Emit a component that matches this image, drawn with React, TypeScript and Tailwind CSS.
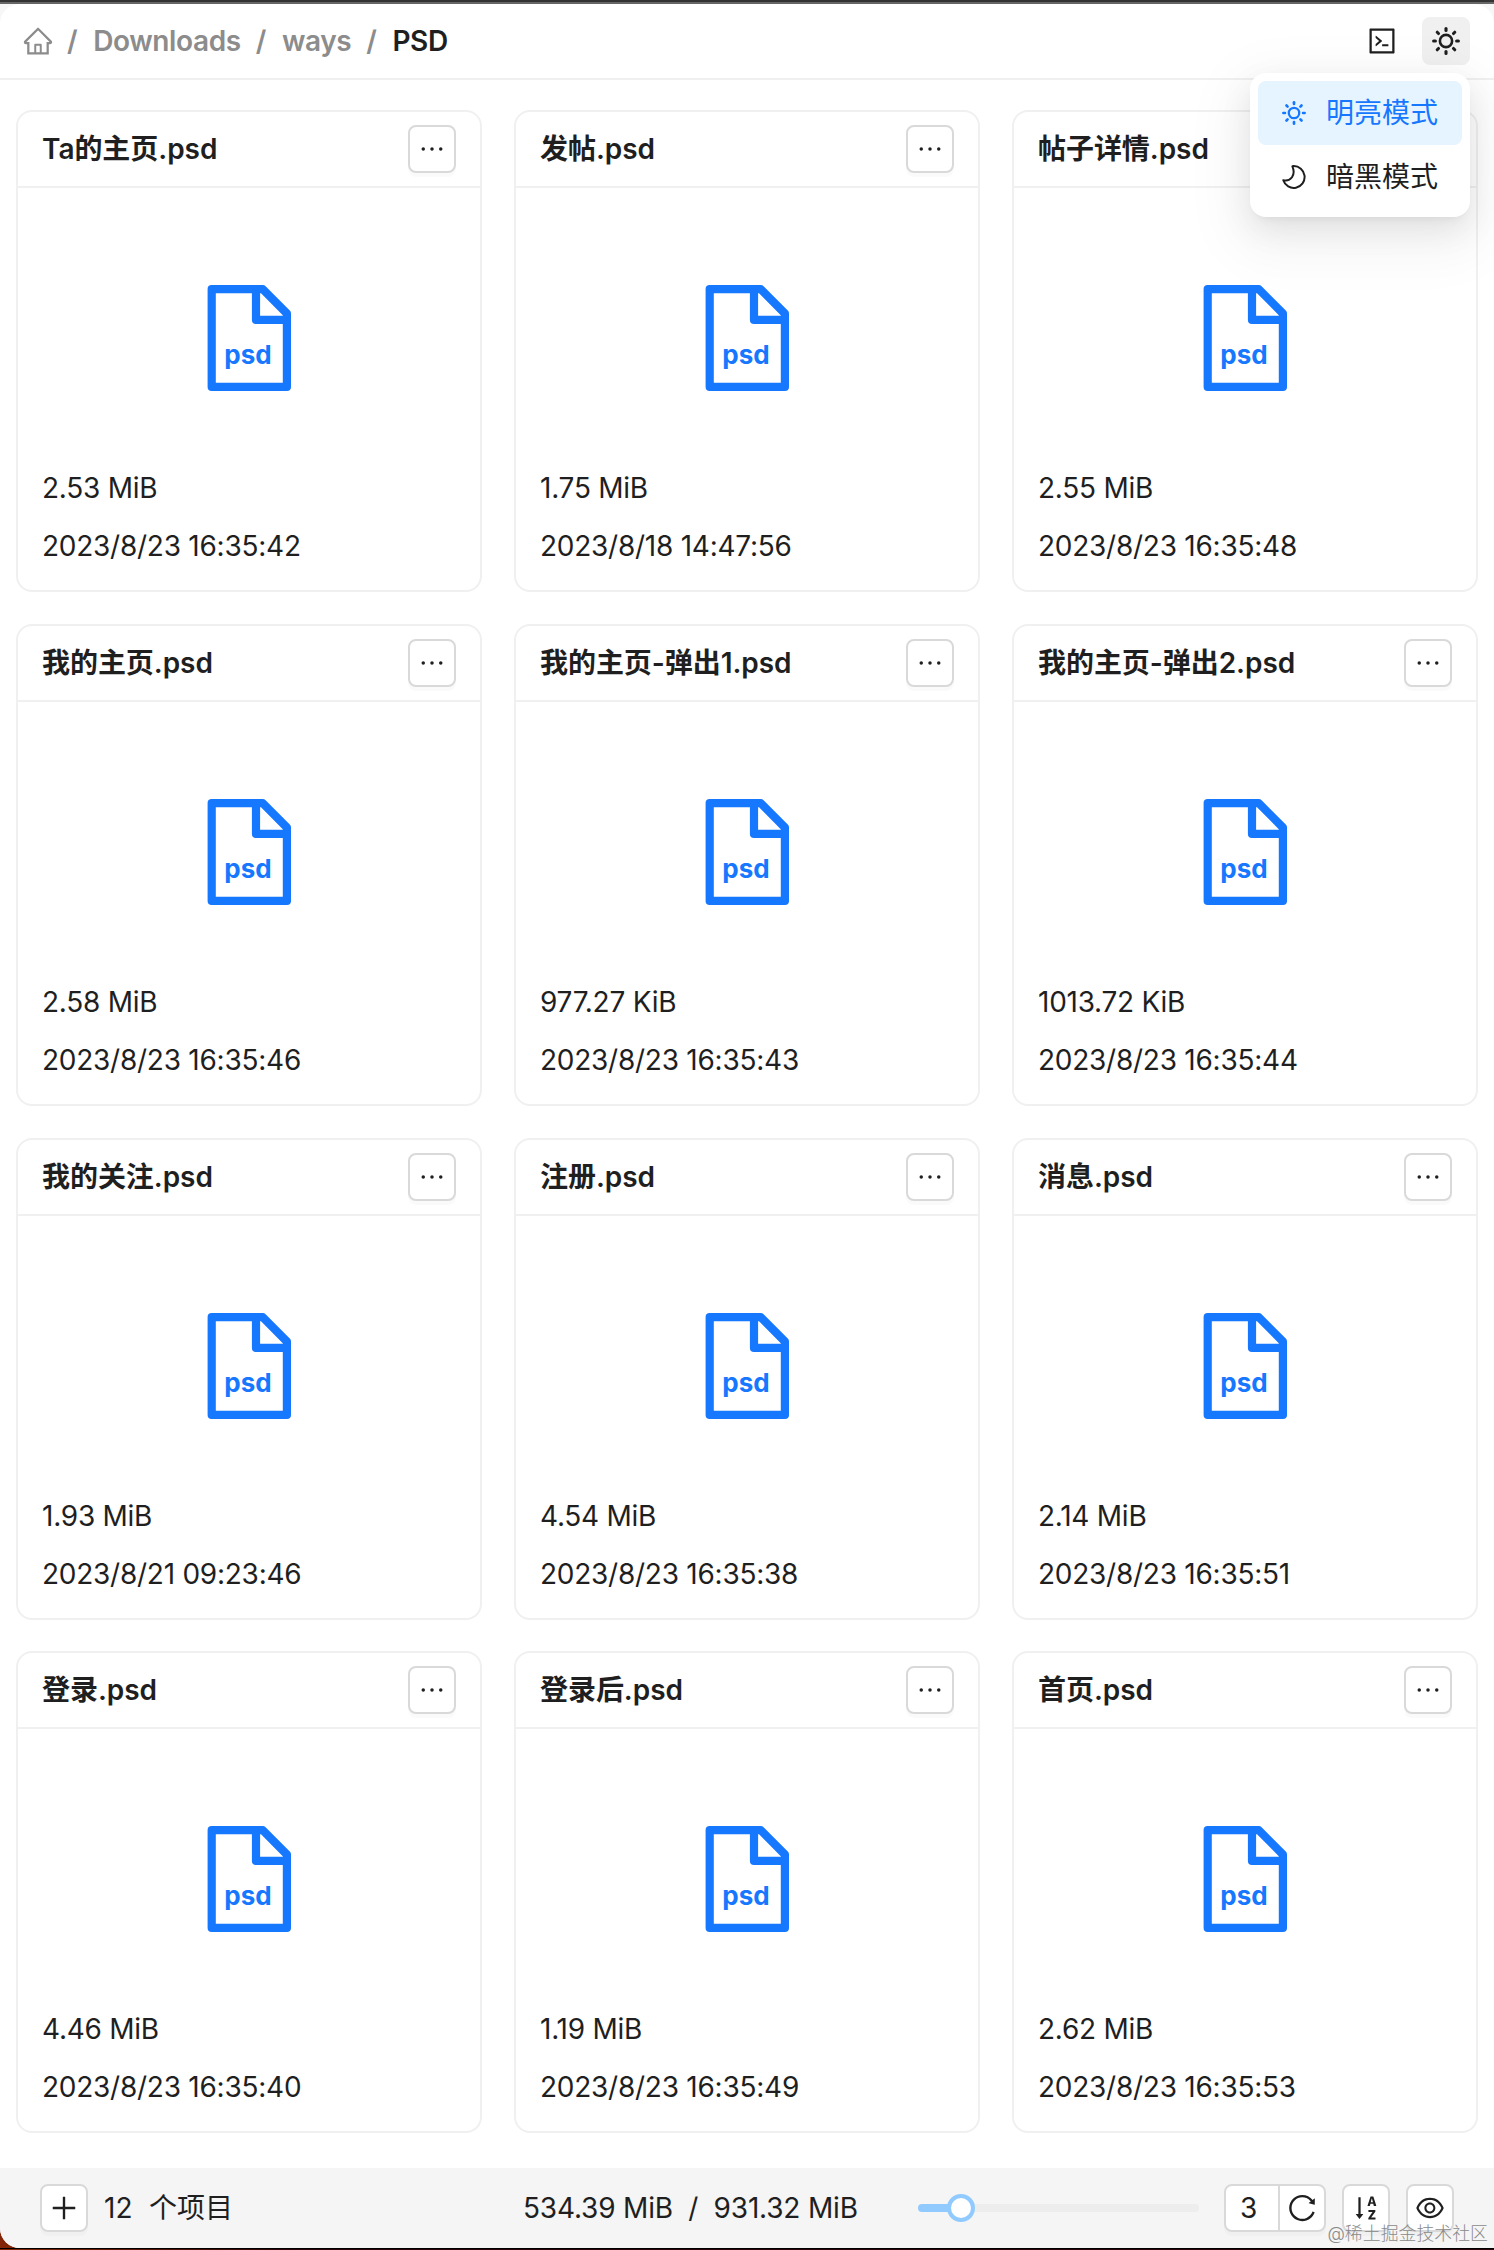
import React from "react";
import {
  AiOutlineCode,
  AiOutlineEllipsis,
  AiOutlineEye,
  AiOutlineHome,
  AiOutlinePlus,
  AiOutlineReload,
  AiOutlineSortAscending,
} from "react-icons/ai";

const files = [
  { name: "Ta的主页.psd", size: "2.53 MiB", time: "2023/8/23 16:35:42" },
  { name: "发帖.psd", size: "1.75 MiB", time: "2023/8/18 14:47:56" },
  { name: "帖子详情.psd", size: "2.55 MiB", time: "2023/8/23 16:35:48" },
  { name: "我的主页.psd", size: "2.58 MiB", time: "2023/8/23 16:35:46" },
  { name: "我的主页-弹出1.psd", size: "977.27 KiB", time: "2023/8/23 16:35:43" },
  { name: "我的主页-弹出2.psd", size: "1013.72 KiB", time: "2023/8/23 16:35:44" },
  { name: "我的关注.psd", size: "1.93 MiB", time: "2023/8/21 09:23:46" },
  { name: "注册.psd", size: "4.54 MiB", time: "2023/8/23 16:35:38" },
  { name: "消息.psd", size: "2.14 MiB", time: "2023/8/23 16:35:51" },
  { name: "登录.psd", size: "4.46 MiB", time: "2023/8/23 16:35:40" },
  { name: "登录后.psd", size: "1.19 MiB", time: "2023/8/23 16:35:49" },
  { name: "首页.psd", size: "2.62 MiB", time: "2023/8/23 16:35:53" },
];

const crumbs = ["Downloads", "ways", "PSD"];

const rayAngles = [0, 45, 90, 135, 180, 225, 270, 315];

const SunIcon = ({ size }: { size: number }) => (
  <svg width={size} height={size} viewBox="0 0 28 28" fill="none" stroke="currentColor">
    <circle cx="14" cy="14" r="6.1" strokeWidth="2.6" />
    {rayAngles.map((angle) => (
      <path
        key={angle}
        d="M14 1.6V3.4"
        strokeWidth="3.1"
        strokeLinecap="round"
        transform={`rotate(${angle} 14 14)`}
      />
    ))}
  </svg>
);

const MoonIcon = () => (
  <svg width="24" height="24" viewBox="0 0 24 24" fill="none" stroke="currentColor">
    <path
      d="M11.4 1.1A10.9 10.9 0 1 1 1.3 15.2C4.6 15.8 8.2 14.8 10 12.2C11.8 9.6 12 5 10.4 1.3Z"
      strokeWidth="2"
      strokeLinejoin="round"
    />
  </svg>
);

const PsdIcon = () => (
  <svg width="84" height="106" viewBox="0 0 84 106" className="text-[#1677ff]">
    <path
      d="M4.7 4.1H55.7L79.9 28.5V101.9H4.7ZM49 4.1V34.9H79.9"
      fill="none"
      stroke="currentColor"
      strokeWidth="8.2"
      strokeLinejoin="round"
    />
    <text
      x="41"
      y="79"
      textAnchor="middle"
      fill="currentColor"
      className="text-[26px] font-bold"
    >
      psd
    </text>
  </svg>
);

const IconButton = ({ children }: { children: React.ReactNode }) => (
  <button className="flex size-12 shrink-0 items-center justify-center rounded-lg border-2 border-[#d9d9d9] bg-white shadow-[0_4px_0_rgba(0,0,0,0.02)]">
    {children}
  </button>
);

const FileCard = ({ name, size, time }: { name: string; size: string; time: string }) => (
  <div className="h-[482px] rounded-2xl border-2 border-[#f0f0f0] bg-white">
    <div className="flex h-[76px] items-center justify-between border-b-2 border-[#f0f0f0] px-6">
      <h3 className="font-semibold tracking-[-0.05px]">{name}</h3>
      <IconButton>
        <AiOutlineEllipsis size={32} />
      </IconButton>
    </div>
    <div className="flex h-[300px] items-center justify-center">
      <PsdIcon />
    </div>
    <div className="-mt-[29px] px-6 leading-[58px] tracking-[-0.25px]">
      <p>{size}</p>
      <p>{time}</p>
    </div>
  </div>
);

const ThemeMenu = () => (
  <div className="absolute top-[69px] right-6 w-[220px] rounded-2xl bg-white p-2 shadow-[0_12px_32px_rgba(0,0,0,0.08),0_6px_12px_-8px_rgba(0,0,0,0.12),0_18px_56px_16px_rgba(0,0,0,0.05)]">
    <div className="flex h-16 items-center gap-5 rounded-lg bg-[#e6f4ff] px-6 text-[#1677ff]">
      <SunIcon size={24} />
      <span>明亮模式</span>
    </div>
    <div className="flex h-16 items-center gap-5 rounded-lg px-6">
      <MoonIcon />
      <span>暗黑模式</span>
    </div>
  </div>
);

const App = () => {
  return (
    <div className="h-[2250px] w-[1494px] overflow-hidden bg-[linear-gradient(90deg,#832506,#2b0308_20%)] font-[Inter,'Noto_Sans_CJK_SC',sans-serif] text-[28px] leading-[44px] text-[#1f1f1f]">
      <div className="h-1 border-b-2 border-[#666] bg-[#333]" />
      <div className="relative flex h-[2244px] flex-col overflow-hidden rounded-bl-[20px] bg-[#f7f7f7]">
        <div className="flex grow flex-col rounded-t-[20px] bg-white">
          {/* breadcrumb and toolbar */}
          <header className="flex h-[76px] items-center justify-between border-b-2 border-[#f0f0f0] pr-6 pl-[22px]">
            <nav className="flex items-center font-semibold tracking-[-0.4px] text-[#8c8c8c]">
              <AiOutlineHome size={32} className="-mr-[2px]" />
              {crumbs.map((crumb, index) => (
                <React.Fragment key={crumb}>
                  <span className="mr-4 ml-[15px]">/</span>
                  <span className={index == crumbs.length - 1 ? "text-[#1f1f1f]" : ""}>
                    {crumb}
                  </span>
                </React.Fragment>
              ))}
            </nav>
            <div className="flex items-center gap-4">
              <button className="flex size-12 items-center justify-center">
                <AiOutlineCode size={32} />
              </button>
              <button className="flex size-12 items-center justify-center rounded-lg bg-[#f0f0f0]">
                <SunIcon size={28} />
              </button>
            </div>
          </header>

          <main className="grid grid-cols-3 gap-x-8 gap-y-[31.75px] px-4 pt-[30px]">
            {files.map((file) => (
              <FileCard key={file.name} {...file} />
            ))}
          </main>
        </div>

        <footer className="flex h-20 shrink-0 items-center bg-[#f5f5f5] px-10 whitespace-nowrap">
          <IconButton>
            <AiOutlinePlus size={32} />
          </IconButton>
          <span className="ml-4 w-[45px]">12</span>
          <span className="w-[84px]">个项目</span>
          <span className="ml-[290px] w-[395px] shrink-0 tracking-[-0.18px] whitespace-pre">
            534.39 MiB  /  931.32 MiB
          </span>
          <div className="relative flex h-2 w-[281px] shrink-0 rounded bg-[#ededed]">
            <div className="w-[44px] rounded bg-[#91caff]" />
            <div className="absolute -top-2.5 left-[29px] size-7 rounded-full border-4 border-[#91caff] bg-white" />
          </div>
          <div className="ml-[25px] flex h-12 w-[102px] shrink-0 rounded-lg border-2 border-[#d9d9d9] bg-white shadow-[0_4px_0_rgba(0,0,0,0.02)]">
            <div className="flex w-[54px] items-center border-r-2 border-[#d9d9d9] pl-[14px]">3</div>
            <div className="flex grow items-center justify-center">
              <AiOutlineReload size={32} />
            </div>
          </div>
          <div className="ml-4 flex gap-4">
            <IconButton>
              <AiOutlineSortAscending size={32} />
            </IconButton>
            <IconButton>
              <AiOutlineEye size={32} />
            </IconButton>
          </div>
        </footer>

        <ThemeMenu />
        <div className="absolute right-[6px] bottom-0 text-[17.9px] leading-7 font-light text-[#8a8a8a]">
          @稀土掘金技术社区
        </div>
      </div>
      <div className="h-0.5 border-t border-black" />
    </div>
  );
};

export default App;
